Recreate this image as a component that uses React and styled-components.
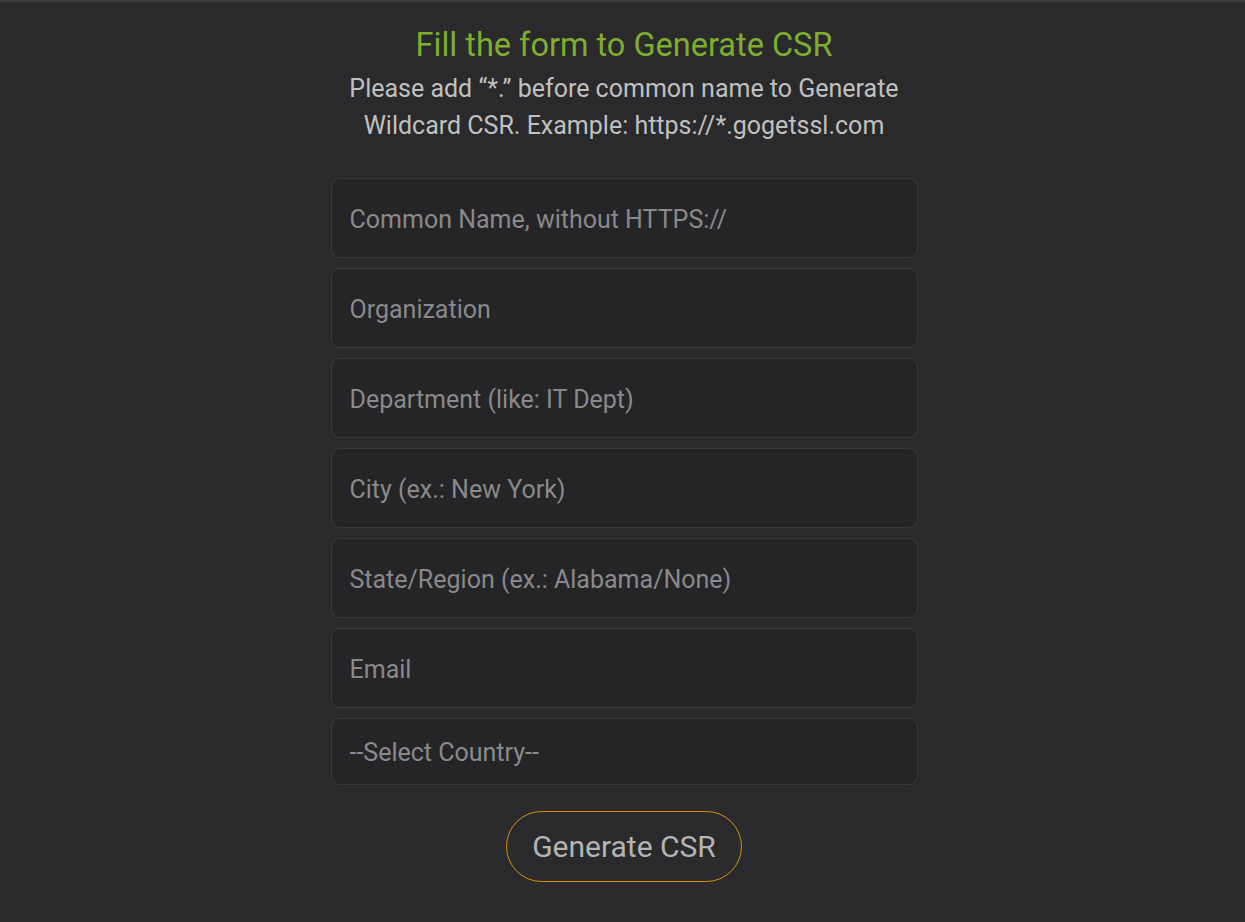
import React from 'react';
import styled, { createGlobalStyle } from 'styled-components';

const Global = createGlobalStyle`
  html, body {
    margin: 0;
    background: #2a292b;
  }
  body {
    font-family: Roboto, "Noto Sans", sans-serif;
  }
`;

const Page = styled.div`
  min-height: 922px;
  box-sizing: border-box;
  border-top: 2px solid #3b3b3d;
  background: #2a292b;
  display: flex;
  flex-direction: column;
  align-items: center;
  padding: 23px 0 0 3px;
`;

const Title = styled.h2`
  margin: 0;
  font-size: 32.5px;
  font-weight: 400;
  line-height: 40px;
  color: #7fad2f;
`;

const Hint = styled.p`
  margin: 5px 0 0;
  width: 600px;
  text-align: center;
  font-size: 25px;
  line-height: 37px;
  color: #c0c0c0;
`;

const Form = styled.form`
  margin-top: 34px;
  width: 587px;
  display: flex;
  flex-direction: column;
  gap: 10px;
  align-items: center;
`;

const Field = styled.input`
  box-sizing: border-box;
  width: 100%;
  height: 80px;
  padding: 2px 18px 0;
  border: 1px solid #3a393c;
  border-radius: 9px;
  background: #252427;
  color: #c3c3c3;
  font-family: inherit;
  font-size: 25px;
  outline: none;

  &::placeholder {
    color: #8a898b;
  }
`;

const Select = styled.select`
  box-sizing: border-box;
  width: 100%;
  height: 67px;
  padding: 2px 18px 0;
  border: 1px solid #3a393c;
  border-radius: 9px;
  background: #252427;
  color: #8a898b;
  font-family: inherit;
  font-size: 25px;
  appearance: none;
  outline: none;
`;

const Submit = styled.button`
  margin-top: 16px;
  width: 236px;
  height: 71px;
  border: 1px solid #d4900e;
  border-radius: 36px;
  background: transparent;
  color: #b4b4b4;
  font-family: inherit;
  font-size: 30px;
  cursor: pointer;
`;

const fields = [
  'Common Name, without HTTPS://',
  'Organization',
  'Department (like: IT Dept)',
  'City (ex.: New York)',
  'State/Region (ex.: Alabama/None)',
  'Email',
];

export default function App() {
  return (
    <Page>
      <Global />
      <Title>Fill the form to Generate CSR</Title>
      <Hint>
        Please add “*.” before common name to Generate Wildcard CSR. Example: https://*.gogetssl.com
      </Hint>
      <Form onSubmit={(e) => e.preventDefault()}>
        {fields.map((f) => (
          <Field key={f} placeholder={f} />
        ))}
        <Select defaultValue="">
          <option value="">--Select Country--</option>
        </Select>
        <Submit type="submit">Generate CSR</Submit>
      </Form>
    </Page>
  );
}
